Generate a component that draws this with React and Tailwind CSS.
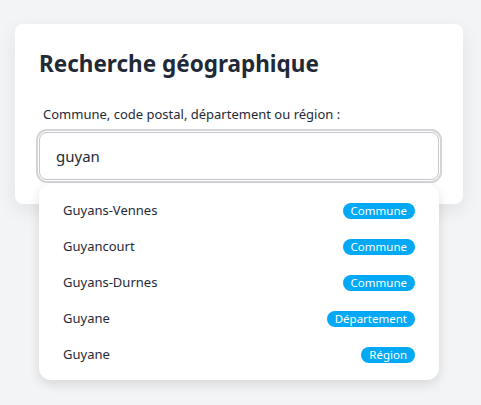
import { useState } from "react";

const RESULTS = [
  { name: "Guyans-Vennes", type: "Commune" },
  { name: "Guyancourt", type: "Commune" },
  { name: "Guyans-Durnes", type: "Commune" },
  { name: "Guyane", type: "Département" },
  { name: "Guyane", type: "Région" },
];

export default function App() {
  const [query, setQuery] = useState("guyan");

  return (
    <div
      className="min-h-[405px] bg-[#f3f4f6] pt-6 px-[15px]"
      style={{ fontFamily: '"Segoe UI", "Noto Sans", sans-serif' }}
    >
      <div className="w-[448px] bg-white rounded-lg shadow-[0_6px_20px_rgba(0,0,0,0.08)] p-6">
        <h1 className="text-[22.5px] leading-8 font-bold text-[#1f2937] mb-6">
          Recherche géographique
        </h1>
        <label className="block text-[13px] leading-5 text-[#1f2937] ml-1 mb-2">
          Commune, code postal, département ou région :
        </label>
        <div className="relative">
          <input
            value={query}
            onChange={(e) => setQuery(e.target.value)}
            className="w-full h-12 rounded-lg border border-[#c8c8cc] px-4 text-[15px] text-[#1f2937] outline-none ring-2 ring-[#d4d4d8] ring-offset-1"
          />
          {/* Suggestions dropdown */}
          <ul className="absolute left-0 right-0 top-[52px] z-10 bg-white rounded-xl shadow-[0_4px_12px_rgba(0,0,0,0.12)] py-2">
            {RESULTS.map((r, i) => (
              <li
                key={i}
                className="h-9 flex items-center justify-between px-6 pt-0.5 text-[13px] text-[#1f2937]"
              >
                <span>{r.name}</span>
                <span className="h-4 flex items-center rounded-full bg-[#03a9f4] px-2 text-[11.5px] text-white">
                  {r.type}
                </span>
              </li>
            ))}
          </ul>
        </div>
      </div>
    </div>
  );
}
